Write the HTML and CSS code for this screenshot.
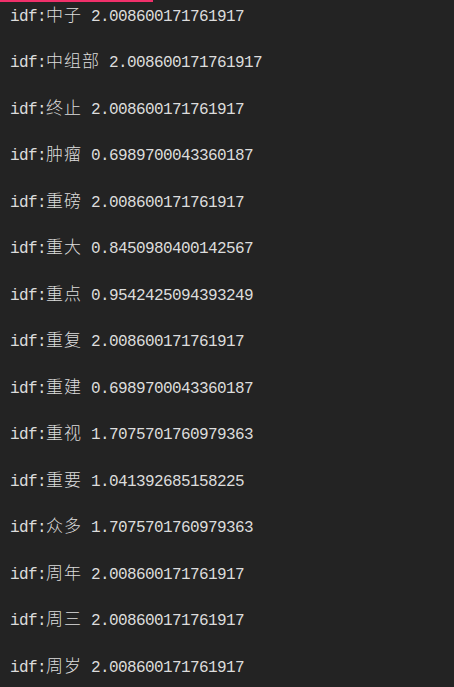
FILE: index.html
```html
<!DOCTYPE html>
<html lang="zh">
<head>
<meta charset="utf-8">
<link rel="stylesheet" href="styles.css">
</head>
<body>
<div class="bar"></div>
<div class="list">
  <div class="row">idf:<span class="cjk">中子</span> 2.008600171761917</div>
  <div class="row">idf:<span class="cjk">中组部</span> 2.008600171761917</div>
  <div class="row">idf:<span class="cjk">终止</span> 2.008600171761917</div>
  <div class="row">idf:<span class="cjk">肿瘤</span> 0.6989700043360187</div>
  <div class="row">idf:<span class="cjk">重磅</span> 2.008600171761917</div>
  <div class="row">idf:<span class="cjk">重大</span> 0.8450980400142567</div>
  <div class="row">idf:<span class="cjk">重点</span> 0.9542425094393249</div>
  <div class="row">idf:<span class="cjk">重复</span> 2.008600171761917</div>
  <div class="row">idf:<span class="cjk">重建</span> 0.6989700043360187</div>
  <div class="row">idf:<span class="cjk">重视</span> 1.7075701760979363</div>
  <div class="row">idf:<span class="cjk">重要</span> 1.041392685158225</div>
  <div class="row">idf:<span class="cjk">众多</span> 1.7075701760979363</div>
  <div class="row">idf:<span class="cjk">周年</span> 2.008600171761917</div>
  <div class="row">idf:<span class="cjk">周三</span> 2.008600171761917</div>
  <div class="row">idf:<span class="cjk">周岁</span> 2.008600171761917</div>
</div>
</body>
</html>
```
FILE: styles.css
```css
html, body {
  margin: 0;
  padding: 0;
  background: #232323;
  height: 100%;
  overflow: hidden;
}
.bar {
  width: 153px;
  height: 2px;
  background: #f0306a;
}
.list {
  display: flex;
  flex-direction: column;
  gap: 16.5px;
  padding: 0 0 0 10px;
  margin-top: -3.5px;
}
.row {
  height: 30px;
  line-height: 30px;
  font-family: "Liberation Mono", "Noto Sans CJK SC", monospace;
  font-size: 16px;
  letter-spacing: -0.6px;
  color: #dcdcdc;
  white-space: nowrap;
}
.cjk {
  font-family: "Noto Sans CJK SC", sans-serif;
  font-size: 17px;
  letter-spacing: 1px;
  font-weight: 300;
}
```
